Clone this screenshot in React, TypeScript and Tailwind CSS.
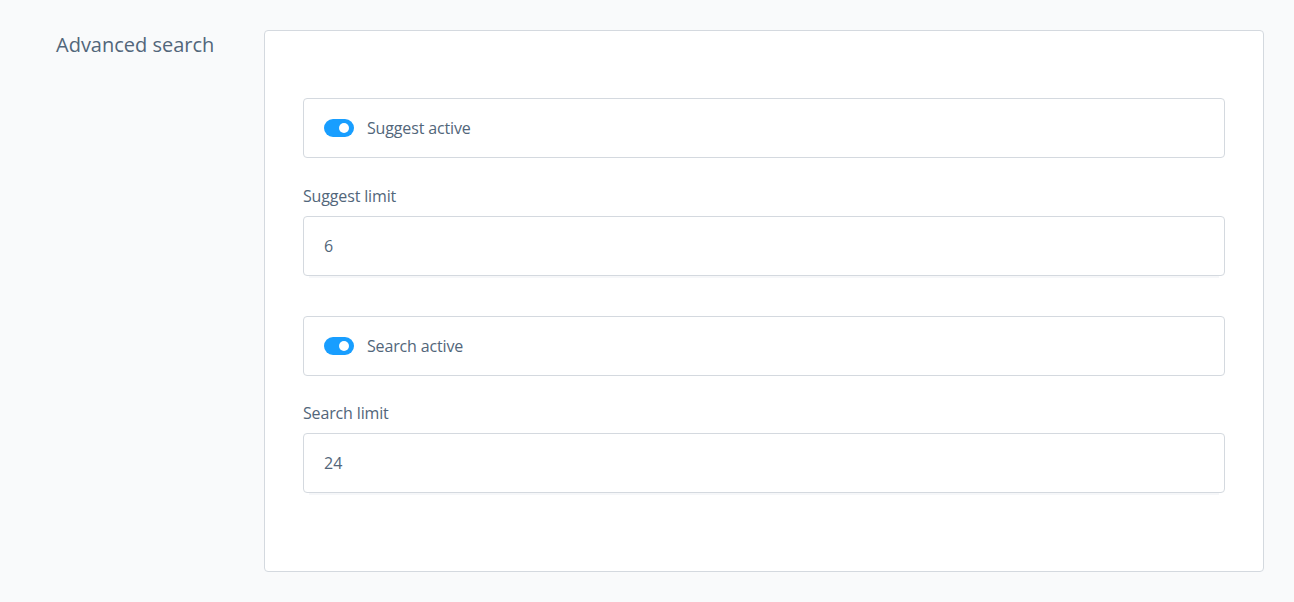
import React from "react";

function Toggle() {
  return (
    <span className="relative inline-flex h-[18px] w-[30px] shrink-0 items-center rounded-full bg-[#189eff]">
      <span className="absolute right-[5px] h-[10px] w-[10px] rounded-full bg-white" />
    </span>
  );
}

function SwitchBox({ label }: { label: string }) {
  return (
    <div className="flex h-[60px] items-center gap-[13px] rounded-[4px] border border-[#d4d9df] bg-white pl-[20px]">
      <Toggle />
      <span className="text-[16px] leading-[22px] tracking-[-0.15px] text-[#52667a]">{label}</span>
    </div>
  );
}

function Field({ label, value }: { label: string; value: string }) {
  return (
    <div className="flex flex-col">
      <label className="mb-[9px] text-[16px] leading-[22px] tracking-[-0.15px] text-[#52667a]">{label}</label>
      <div className="flex h-[60px] items-center rounded-[4px] border border-[#d4d9df] bg-white pl-[20px] text-[16px] text-[#52667a] shadow-[0_8px_0_-6px_#f6f7f9]">
        {value}
      </div>
    </div>
  );
}

export default function App() {
  return (
    <div
      className="flex h-[602px] w-full bg-[#f9fafb] pl-[56px] pt-[30px]"
      style={{ fontFamily: '"Open Sans", "Noto Sans", sans-serif' }}
    >
      <div className="w-[208px] shrink-0">
        <h2 className="text-[20px] leading-[30px] text-[#52667a]">Advanced search</h2>
      </div>
      <div className="h-[542px] w-[1000px] rounded-[4px] border border-[#d4d9df] bg-white px-[38px] pt-[67px]">
        <SwitchBox label="Suggest active" />
        <div className="mt-[27px]">
          <Field label="Suggest limit" value="6" />
        </div>
        <div className="mt-[40px]">
          <SwitchBox label="Search active" />
        </div>
        <div className="mt-[26px]">
          <Field label="Search limit" value="24" />
        </div>
      </div>
    </div>
  );
}
